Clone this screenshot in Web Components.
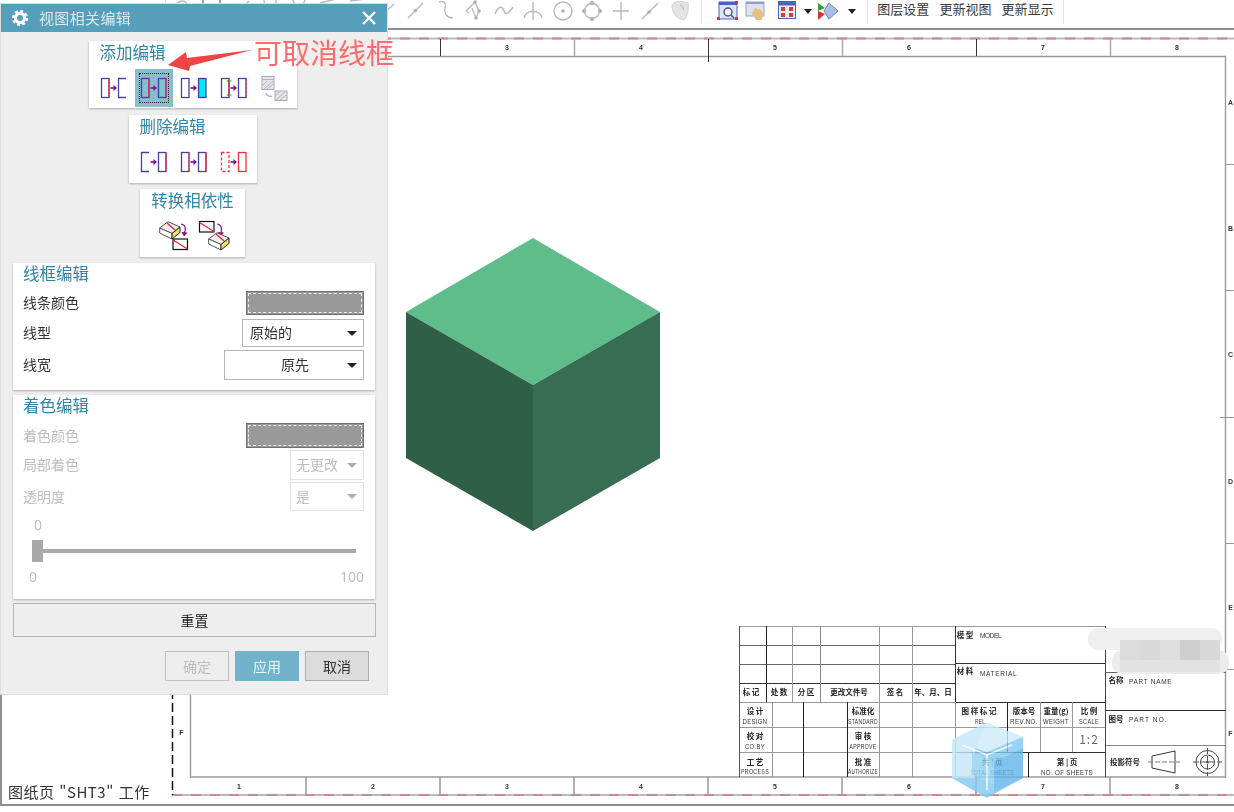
<!DOCTYPE html>
<html lang="zh">
<head>
<meta charset="utf-8">
<title>视图相关编辑</title>
<style>
  html, body { margin: 0; height: 100%; background: #fff; font-family: "Noto Sans CJK SC", "Liberation Sans", sans-serif; }
  body { overflow: hidden; }
</style>
</head>
<body>
<cad-app>
  <cad-toolbar></cad-toolbar>
  <drawing-sheet>
    <part-cube></part-cube>
    <title-block></title-block>
  </drawing-sheet>
  <status-note>图纸页 "SHT3" 工作</status-note>
  <view-dialog></view-dialog>
  <red-note>可取消线框</red-note>
</cad-app>

<script>
const CJK = '"Noto Sans CJK SC", "Liberation Sans", sans-serif';

// page shell: toolbar on top, canvas under it, the rest floats
class CadApp extends HTMLElement {
  constructor() {
    super();
    this.attachShadow({ mode: 'open' });
    this.shadowRoot.innerHTML = `
      <style>
        :host { display: flex; flex-direction: column; position: relative; width: 1234px; height: 812px; overflow: hidden; filter: blur(.35px); }
      </style>
      <slot></slot>
    `;
  }
}

const TB_GRAY = 'fill="none" stroke="#b9b9b9" stroke-width="1.4"';
const TOOL_ICONS = [
  `<circle cx="12" cy="8" r="6" ${TB_GRAY}/>`,
  `<rect x="4" y="-6" width="17" height="14" fill="none" stroke="#c55" stroke-width="1.4"/>`,
  `<path d="M4 18 20 2" ${TB_GRAY}/>`,
  `<circle cx="12" cy="2" r="6" ${TB_GRAY}/>`,
  `<circle cx="12" cy="0" r="6" ${TB_GRAY}/>`,
  `<path d="M4 4 20 0" ${TB_GRAY}/>`,
  `<path d="M4 2 20 0" ${TB_GRAY}/>`,
  `<path d="M4 19 19 5" ${TB_GRAY}/>`,
  `<path d="M4 19 19 4" ${TB_GRAY}/><circle cx="11.5" cy="11.5" r="1.8" fill="#b0b0b0"/>`,
  `<path d="M6 3C12 1 13 5 12 9 11 15 14 19 20 19" ${TB_GRAY}/>`,
  `<path d="M3 12 12 3 16 12 13 19 9 9M3 12 6 14" ${TB_GRAY}/><circle cx="12" cy="3" r="1.8" fill="#b0b0b0"/><circle cx="16" cy="12" r="1.8" fill="#b0b0b0"/><circle cx="13" cy="19" r="1.8" fill="#b0b0b0"/>`,
  `<path d="M3 15C7 6 10 7 12 12 14 17 17 14 21 8" ${TB_GRAY}/>`,
  `<path d="M12 3V21M3 19C5 10 19 10 21 19" ${TB_GRAY}/>`,
  `<circle cx="12" cy="12" r="9" ${TB_GRAY}/><circle cx="12" cy="12" r="1.8" fill="#b0b0b0"/>`,
  `<circle cx="12" cy="12" r="7.5" ${TB_GRAY}/><circle cx="12" cy="4" r="2" fill="#b0b0b0"/><circle cx="12" cy="20" r="2" fill="#b0b0b0"/><circle cx="4" cy="12" r="2" fill="#b0b0b0"/><circle cx="20" cy="12" r="2" fill="#b0b0b0"/>`,
  `<path d="M12 3V21M4 12H20" ${TB_GRAY}/>`,
  `<path d="M4 20 20 4" ${TB_GRAY}/><circle cx="11" cy="13" r="1.8" fill="#b0b0b0"/>`,
  `<path d="M4 6C8 1 15 2 20 4 21 9 20 16 16 21 9 20 4 14 4 6Z" fill="#e4e4e4" stroke="#d0d0d0"/><path d="M12 6C15 7 16 9 15 11" fill="none" stroke="#aaa"/>`
];

class CadToolbar extends HTMLElement {
  constructor() {
    super();
    this.attachShadow({ mode: 'open' });
    const slots = TOOL_ICONS.map(p => `<svg class="tool" viewBox="0 0 24 24" width="24" height="24">${p}</svg>`).join('');
    this.shadowRoot.innerHTML = `
      <style>
        :host { display: flex; align-items: flex-start; flex: none; box-sizing: border-box; height: 30px; border-bottom: 2px solid #8b8f91; padding-left: 165px; background: #fff; }
        .sep { flex: none; width: 1px; height: 24px; background: #e2e2e2; }
        .tool { flex: none; margin: -1px 2.65px 0; }
        .solid { flex: none; margin-top: 0; }
        .drop { flex: none; width: 0; height: 0; margin-top: 9px; border: 4px solid transparent; border-top: 5px solid #222; border-bottom: 0; }
        .txt { flex: none; margin-top: -1px; font: 13px/20px ${CJK}; color: #3a3a3a; }
      </style>
      <div class="sep"></div>
      <div style="width:1.3px"></div>
      ${slots}
      <div class="sep" style="margin-left:7px"></div>
      <svg class="solid" style="margin-left:15px" width="22" height="22" viewBox="0 0 22 22">
        <rect x="2" y="2" width="18" height="17" fill="#dbe6f4" stroke="#4a64b8"/><rect x="2" y="2" width="18" height="3" fill="#4a64b8"/>
        <circle cx="11" cy="12" r="4" fill="#eef" stroke="#556" stroke-width="1.4"/><path d="M14 15 17 18" stroke="#556" stroke-width="1.5"/>
        <rect x="0" y="17" width="3" height="3" fill="#d33"/><rect x="18" y="1" width="3" height="3" fill="#d33"/><rect x="18" y="17" width="3" height="3" fill="#d33"/>
      </svg>
      <svg class="solid" style="margin-left:5px" width="22" height="22" viewBox="0 0 22 22">
        <rect x="2" y="2" width="18" height="14" fill="#dde3ec" stroke="#9aa6bc"/><rect x="2" y="2" width="18" height="2" fill="#8ea2c8"/>
        <path d="M10 9 12 8 14 10 16 9 19 13 18 20 12 20 8 14Z" fill="#e9bd84"/>
      </svg>
      <svg class="solid" style="margin-left:11px" width="20" height="22" viewBox="0 0 20 22">
        <rect x="1.5" y="1.5" width="17" height="17" fill="#e6ecf8" stroke="#4a64b8"/><rect x="1.5" y="1.5" width="17" height="4" fill="#4a64b8"/>
        <rect x="4" y="7" width="4" height="4" fill="#d83c2c"/><rect x="12" y="7" width="4" height="4" fill="#d83c2c"/><rect x="4" y="13" width="4" height="4" fill="#d83c2c"/><rect x="12" y="13" width="4" height="4" fill="#d83c2c"/>
      </svg>
      <div class="drop" style="margin-left:7px"></div>
      <svg class="solid" style="margin-left:4px" width="24" height="22" viewBox="0 0 24 22">
        <path d="M13 3 22 11 13 19 8 11Z" fill="#a9bfe4" stroke="#7088b8"/>
        <path d="M2 3 9 8 2 11Z" fill="#3a9a3a"/><path d="M2 11 9 14 2 20Z" fill="#d8342c"/>
      </svg>
      <div class="drop" style="margin-left:8px"></div>
      <div class="sep" style="margin-left:11px"></div>
      <div class="txt" style="margin-left:9px">图层设置</div>
      <div class="txt" style="margin-left:10px">更新视图</div>
      <div class="txt" style="margin-left:10px">更新显示</div>
      <div class="sep" style="margin-left:10px"></div>
    `;
  }
}

// frame of the sheet, drawn in page coordinates
class DrawingSheet extends HTMLElement {
  constructor() {
    super();
    this.attachShadow({ mode: 'open' });
    let s = '';
    const zoneX = [172, 306, 440, 574, 708, 842, 976, 1110];
    zoneX.slice(1).forEach((x, i) => {
      const dark = i % 2 === 1;
      s += `<path d="M${x + .5} 39V${x === 708 ? 62 : 56}" stroke="${dark ? '#333' : '#aaa'}" stroke-width="${dark ? 1 : 1.5}"/>`;
      s += `<path d="M${x} 777V795" stroke="#999" stroke-width="1.5"/>`;
    });
    zoneX.forEach((x, i) => {
      if (i >= 2) s += `<text x="${x + 67}" y="50" class="z">${i + 1}</text>`;
      s += `<text x="${x + 67}" y="789" class="z">${i + 1}</text>`;
    });
    ['A', 'B', 'C', 'D', 'E', 'F'].forEach((l, i) => {
      s += `<text x="1230.5" y="${105 + i * 126.2}" class="z">${l}</text>`;
    });
    [164, 290, 417, 543, 669].forEach(y => {
      s += `<path d="M${y === 417 ? 1220 : 1226} ${y + .5}H1234" stroke="#999"/>`;
    });
    this.shadowRoot.innerHTML = `
      <style>
        :host { display: block; position: relative; flex: none; box-sizing: content-box; height: 774px; border-left: 2px solid #8b8f91; border-bottom: 2px solid #8b8f91; }
        svg { display: block; }
        .z { font: bold 7px "Liberation Sans", sans-serif; text-anchor: middle; fill: #333; }
      </style>
      <svg width="1232" height="774" viewBox="2 30 1232 774">
        <path d="M172 38.5H1234M172 795H1234" stroke="#bbb" stroke-width="2"/>
        <path d="M172 38.5H1234M172 795H1234" stroke="#c98b8b" stroke-width="2" stroke-dasharray="10 9"/>
        <path d="M172.5 40V795" stroke="#111" stroke-width="1.5" stroke-dasharray="9 4"/>
        <path d="M190.5 777V56.5H1225.5V777Z" fill="none" stroke="#9a9a9a" stroke-width="1.4"/>
        <text x="181.5" y="735" class="z">F</text>
        ${s}
      </svg>
      <slot></slot>
    `;
  }
}

class PartCube extends HTMLElement {
  constructor() {
    super();
    this.attachShadow({ mode: 'open' });
    this.shadowRoot.innerHTML = `
      <style>
        :host { display: block; position: absolute; left: 404px; top: 208px; width: 254px; height: 293px; }
        svg { display: block; }
      </style>
      <svg width="254" height="293" viewBox="406 238 254 293">
        <path d="M533 238 660 312 533 385 406 312Z" fill="#5fbd8b"/>
        <path d="M406 312 533 385V531L406 458Z" fill="#305f48"/>
        <path d="M660 312 533 385V531L660 458Z" fill="#376e53"/>
      </svg>
    `;
  }
}

class TitleBlock extends HTMLElement {
  constructor() {
    super();
    this.attachShadow({ mode: 'open' });
    const hl = (y, a, b, c) => `<path d="M${a} ${y + .5}H${b}" stroke="${c}"/>`;
    const vl = (x, a, b, c) => `<path d="M${x + .5} ${a}V${b}" stroke="${c}"/>`;
    const cn = (x, y, t, size = 7.5) => `<text x="${x}" y="${y}" class="cn" style="font-size:${size}px">${t}</text>`;
    const en = (x, y, t, w) => `<text x="${x}" y="${y}" class="en" textLength="${w}" lengthAdjust="spacingAndGlyphs">${t}</text>`;
    const left = (x, y, t, w) => `<text x="${x}" y="${y}" class="en" style="text-anchor:start" textLength="${w}">${t}</text>`;
    let s = '';
    [[645, '#666'], [664, '#666'], [683, '#333']].forEach(([y, c]) => { s += hl(y, 739, 955, c); });
    s += hl(626, 739, 1105, '#999') + hl(702, 739, 955, '#999') + hl(727, 739, 1105, '#999') + hl(752, 739, 955, '#999');
    s += hl(663, 955, 1105, '#333') + hl(702, 955, 1105, '#333') + hl(752, 955, 1105, '#333');
    s += hl(672, 1105, 1226, '#666') + hl(710, 1105, 1226, '#333') + hl(745, 1105, 1226, '#888');
    [[766, '#222'], [792, '#999'], [820, '#888'], [879, '#999'], [912, '#999']].forEach(([x, c]) => { s += vl(x, 626, 702, c); });
    s += vl(739, 626, 777, '#555') + vl(955, 626, 702, '#333') + vl(955, 702, 777, '#999');
    s += vl(772, 702, 777, '#999') + vl(803, 702, 777, '#222') + vl(847, 702, 777, '#222') + vl(879, 702, 777, '#999') + vl(912, 702, 777, '#999');
    s += vl(1105, 626, 777, '#444') + vl(1007, 702, 752, '#222') + vl(1040, 702, 752, '#999') + vl(1072, 702, 752, '#999') + vl(1028, 752, 777, '#222');
    [[751, '标 记'], [779, '处 数'], [806, '分 区'], [849, '更改文件号'], [895, '签 名'], [933, '年、月、日']].forEach(([x, t]) => { s += cn(x, 695, t); });
    s += cn(755, 714, '设 计') + en(755, 724, 'DESIGN', 25) + cn(755, 739, '校 对') + en(755, 749, 'CO.BY', 20) + cn(755, 765, '工 艺') + en(755, 774, 'PROCESS', 28);
    s += cn(863, 714, '标准化') + en(863, 724, 'STANDARD', 30) + cn(863, 739, '审 核') + en(863, 749, 'APPROVE', 27) + cn(863, 765, '批 准') + en(863, 774, 'AUTHORIZE', 30);
    s += cn(979, 714, '图 样 标 记') + en(981, 724, 'REL.', 12);
    s += cn(1024, 714, '版本号') + en(1024, 724, 'REV.NO.', 28);
    s += cn(1056, 714, '重量(g)') + en(1056, 724, 'WEIGHT', 26);
    s += cn(1089, 714, '比 例') + en(1089, 724, 'SCALE', 20);
    s += `<text x="1089" y="744" class="cn" style="font-size:12px;font-weight:400;fill:#666;letter-spacing:1px">1:2</text>`;
    s += cn(992, 765, '共 | 页') + en(992, 775, 'TOTAL SHEETS', 44);
    s += cn(1067, 765, '第 | 页') + en(1067, 775, 'NO. OF SHEETS', 52);
    s += cn(965, 638, '模 型') + left(980, 638, 'MODEL', 22);
    s += cn(965, 674, '材 料') + left(980, 676, 'MATERIAL', 37);
    s += cn(1116, 683, '名称') + left(1129, 684, 'PART NAME', 43);
    s += cn(1116, 722, '图号') + left(1129, 722, 'PART NO.', 38);
    s += cn(1125, 765, '投影符号');
    s += `<path d="M1152 756 1175 751V773L1152 768Z" fill="none" stroke="#333"/><path d="M1148 762H1180" stroke="#777" stroke-dasharray="5 2"/>`;
    s += `<g fill="none" stroke="#444"><circle cx="1207.5" cy="762" r="11.5"/><circle cx="1207.5" cy="762" r="7"/></g><circle cx="1207.5" cy="762" r="1.5" fill="#555"/><path d="M1207.5 748V776M1193 762H1222" stroke="#555" stroke-dasharray="6 2"/>`;
    this.shadowRoot.innerHTML = `
      <style>
        :host { display: block; position: absolute; left: 734px; top: 594px; width: 498px; height: 180px; }
        svg { display: block; }
        .cn { font-family: ${CJK}; font-weight: 700; text-anchor: middle; fill: #222; }
        .en { font: 6.5px "Liberation Sans", sans-serif; text-anchor: middle; fill: #333; letter-spacing: .4px; }
      </style>
      <svg width="498" height="180" viewBox="736 624 498 180">
        ${s}
        <g>
          <rect x="1088" y="628" width="134" height="22" rx="10" fill="#efefef"/>
          <rect x="1112" y="650" width="117" height="24" rx="10" fill="#ececec"/>
          <rect x="1120" y="640" width="20" height="20" fill="#dcdcdc"/><rect x="1140" y="640" width="20" height="20" fill="#d9d9d9"/>
          <rect x="1160" y="640" width="20" height="20" fill="#dedede"/><rect x="1180" y="640" width="20" height="20" fill="#cecece"/>
          <rect x="1200" y="640" width="20" height="20" fill="#d8d8d8"/><rect x="1120" y="660" width="100" height="12" fill="#e2e2e2"/>
        </g>
        <g opacity=".8">
          <path d="M987 723 1023 737V778L987 798 952 778V740Z" fill="#80c8f0"/>
          <path d="M987 723 1023 737 987 752 952 740Z" fill="#cdeafa"/>
          <path d="M952 740 965 733 987 723 975 748 975 778 952 778Z" fill="#c4e6f8"/>
          <path d="M972 752 994 762V785L972 775Z" fill="#8fd0f2"/>
          <path d="M994 762 1023 748V778L994 792Z" fill="#5fb4ea"/>
          <path d="M962 745 987 755 1012 745M987 755V790" fill="none" stroke="#f2fbff" stroke-width="1.5"/>
        </g>
      </svg>
    `;
  }
}

class StatusNote extends HTMLElement {
  constructor() {
    super();
    this.attachShadow({ mode: 'open' });
    this.shadowRoot.innerHTML = `
      <style>
        :host { display: block; position: absolute; left: 8px; top: 781px; font: 15px/22px ${CJK}; color: #333; letter-spacing: .5px; word-spacing: 1px; white-space: nowrap; }
      </style>
      <slot></slot>
    `;
  }
}

class RedNote extends HTMLElement {
  constructor() {
    super();
    this.attachShadow({ mode: 'open' });
    this.shadowRoot.innerHTML = `
      <style>
        :host { display: block; position: absolute; left: 0; top: 0; width: 400px; height: 80px; pointer-events: none; }
        svg { position: absolute; left: 0; top: 0; }
        span { position: absolute; left: 254px; top: 32px; font: 28px/40px ${CJK}; color: #ff6a6a; white-space: nowrap; }
      </style>
      <svg width="400" height="80"><path d="M168 65 186 52 187 58 252 50 190 66 189 71Z" fill="#f04444"/></svg>
      <span><slot></slot></span>
    `;
  }
}

const BLUE = '#4440a8', RED = '#f0303c', ARROW = '<path d="M9.5 10H13" stroke="#80108c" stroke-width="1.6"/><path d="M12.5 7 16 10 12.5 13Z" fill="#80108c"/>';
const box = (x, fill = 'none') => `<rect x="${x}" y=".5" width="7.5" height="19" fill="${fill}" stroke="${BLUE}" stroke-width="1.3"/>`;
const redEdge = x => `<path d="M${x} .5V19.5" stroke="${RED}" stroke-width="1.3"/>`;
const redDash = x => `<path d="M${x} .5V19.5" stroke="${RED}" stroke-width="1.3" stroke-dasharray="2.5 1.5"/>`;
const brick = (dx, dy) => `<g transform="translate(${dx} ${dy})">
    <path d="M.7 7 9 .7 21 6 13 12.5Z" fill="#eee" stroke="#555" stroke-width="1"/>
    <path d="M.7 7V12L13 18V12.5Z" fill="#fff" stroke="#555" stroke-width="1"/>
    <path d="M13 12.5 21 6V11.5L13 18Z" fill="#f0e060" stroke="#222" stroke-width="1"/>
    <path d="M8 2 16 9" stroke="#e82030" stroke-width="1.3"/></g>`;
const sheet = (x, y) => `<rect x="${x}" y="${y}" width="14.5" height="10.5" fill="#fff" stroke="#111" stroke-width="1.2"/><path d="M${x} ${y + 1}L${x + 14.5} ${y + 10}" stroke="#e82030" stroke-width="1.2"/>`;

const EDIT_ICONS = {
  addLeft: box(.5) + redEdge(8) + ARROW + `<path d="M25 .5H17.5V19.5H25" fill="none" stroke="${BLUE}" stroke-width="1.3"/>`,
  addBoth: box(.5) + redEdge(8) + ARROW + box(17.5) + redDash(25),
  addFill: box(.5) + ARROW + box(17.5, '#00e4ff'),
  addTrim: box(.5) + redEdge(8) + '<path d="M5.5 3H10.5M5.5 17H10.5" stroke="#1a9a34" stroke-width="1.2"/>' + ARROW + box(17.5) + redDash(25),
  addHatch: `<rect x="1" y=".5" width="12" height="13" fill="#e4e4ea" stroke="#a8a8c0"/><path d="M1 3.5H13" stroke="#c8a8b8"/><path d="M3 13 12 5M6 13 12 8M2 9 6 5" stroke="#b8b8b8"/>
    <path d="M5 17C6 20 9 21 11 20" fill="none" stroke="#b49ac8" stroke-width="1.1"/>
    <rect x="14" y="15" width="12" height="9.5" fill="#e4e4e4" stroke="#a8a8c0"/><path d="M15 24 24 16M19 24 25 19M14 20 18 16" stroke="#b8b8b8"/>`,
  delLeft: `<path d="M8 .5H.5V19.5H8" fill="none" stroke="${BLUE}" stroke-width="1.3"/>` + ARROW + box(17.5) + redEdge(25),
  delInner: box(.5) + redDash(8) + ARROW + box(17.5) + redEdge(25),
  delAll: `<rect x=".5" y=".5" width="7.5" height="19" fill="none" stroke="${RED}" stroke-width="1.3" stroke-dasharray="3 2"/>` + ARROW + `<rect x="17.5" y=".5" width="7.5" height="19" fill="none" stroke="${RED}" stroke-width="1.3"/>`,
  toSheet: brick(0, 0) + `<path d="M22 3C27 4 27 8 25.5 12" fill="none" stroke="#80108c" stroke-width="1.2"/><path d="M22.5 11 28.5 11.5 25 15.5Z" fill="#80108c"/>` + sheet(14, 18),
  toSolid: sheet(.5, .5) + `<path d="M18 3C23 4 23 8 22 12" fill="none" stroke="#80108c" stroke-width="1.2"/><path d="M19 11 25 11.5 21.5 15.5Z" fill="#80108c"/>` + brick(9, 11)
};

class EditIcon extends HTMLElement {
  connectedCallback() {
    if (this.shadowRoot) return;
    this.attachShadow({ mode: 'open' });
    const kind = this.getAttribute('kind');
    const big = kind === 'toSheet' || kind === 'toSolid' ;
    const tall = kind === 'addHatch';
    this.shadowRoot.innerHTML = `
      <style>
        :host { display: flex; align-items: center; justify-content: center; width: 40px; height: 38px; }
        .on { display: flex; align-items: center; justify-content: center; box-sizing: border-box; width: 38px; height: 38px; }
        :host([selected]) .on { background: #8abccf; outline: 1.5px dotted #222; outline-offset: -5px; }
        svg { display: block; overflow: visible; }
      </style>
      <div class="on">
        <svg width="${big ? 30 : 26}" height="${big ? 30 : tall ? 25 : 20}" viewBox="0 0 ${big ? 30 : 26} ${big ? 30 : tall ? 25 : 20}">${EDIT_ICONS[kind]}</svg>
      </div>
    `;
  }
}

class DialogCard extends HTMLElement {
  constructor() {
    super();
    this.attachShadow({ mode: 'open' });
    this.shadowRoot.innerHTML = `
      <style>
        :host { display: block; flex: none; box-sizing: border-box; background: #fff; box-shadow: 0 1px 2px rgba(0,0,0,.28); }
        .t { height: 24px; font: 16.5px/21px ${CJK}; color: #2f86a8; padding: 0 14px 0 10px; white-space: nowrap; }
        :host([icons]) .t { height: 28px; line-height: 22px; padding-left: 11px; padding-right: 11px; }
        .row { display: flex; justify-content: center; padding: 0 3px 0 5px; }
        :host(:not([icons])) .row { display: block; padding: 0 11px 0 11px; }
      </style>
      <div class="t"><slot name="title"></slot></div>
      <div class="row"><slot></slot></div>
    `;
  }
}

class FieldRow extends HTMLElement {
  constructor() {
    super();
    this.attachShadow({ mode: 'open' });
    this.shadowRoot.innerHTML = `
      <style>
        :host { display: flex; align-items: center; justify-content: space-between; font: 14px/20px ${CJK}; color: #333; }
        :host([disabled]) { color: #bdbdbd; }
        span { margin: -2px 0 0 -1px; }
      </style>
      <span><slot name="label"></slot></span>
      <slot></slot>
    `;
  }
}

class ColorSwatch extends HTMLElement {
  constructor() {
    super();
    this.attachShadow({ mode: 'open' });
    this.shadowRoot.innerHTML = `
      <style>
        :host { display: block; box-sizing: border-box; width: 118px; height: 100%; background: #999; border: 1px solid #707070; padding: 1px; }
        div { box-sizing: border-box; height: 100%; border: 1px dashed #eee; }
      </style>
      <div></div>
    `;
  }
}

class SelectBox extends HTMLElement {
  constructor() {
    super();
    this.attachShadow({ mode: 'open' });
    this.shadowRoot.innerHTML = `
      <style>
        :host { display: flex; align-items: center; box-sizing: border-box; height: 100%; background: #fff; border: 1.5px solid #b5b5b5; padding: 0 6px 0 7px; font: 14px/20px ${CJK}; color: #333; }
        :host([disabled]) { border-color: #e2e2e2; color: #bdbdbd; padding-left: 5px; }
        .v { flex: 1; margin-top: -2px; }
        :host([center]) .v { text-align: center; padding-left: 11px; }
        i { flex: none; width: 0; height: 0; border: 5px solid transparent; border-top: 5px solid #222; border-bottom: 0; }
        :host([disabled]) i { border-top-color: #b0b0b0; }
      </style>
      <span class="v"><slot></slot></span>
      <i></i>
    `;
  }
}

class OpacitySlider extends HTMLElement {
  constructor() {
    super();
    this.attachShadow({ mode: 'open' });
    this.shadowRoot.innerHTML = `
      <style>
        :host { display: block; font: 14px/20px "Open Sans", "Liberation Sans", sans-serif; color: #bdbdbd; }
        .val { padding-left: 10px; height: 20px; }
        .bar { display: flex; align-items: center; height: 22px; margin: 5px 8px 5px 8px; }
        .thumb { flex: none; width: 11px; height: 22px; background: #a9a9a9; }
        .track { flex: 1; height: 4px; background: #a9a9a9; }
        .scale { display: flex; justify-content: space-between; padding: 0 0 0 5px; }
      </style>
      <div class="val">0</div>
      <div class="bar"><div class="thumb"></div><div class="track"></div></div>
      <div class="scale"><span>0</span><span>100</span></div>
    `;
  }
}

class FlatButton extends HTMLElement {
  constructor() {
    super();
    this.attachShadow({ mode: 'open' });
    this.shadowRoot.innerHTML = `
      <style>
        :host { display: flex; align-items: center; justify-content: center; flex: none; box-sizing: border-box; width: 64px; height: 30px; padding-bottom: 1px; border: 1.5px solid #adadad; background: #dcdcdc; color: #333; font: 14px/20px ${CJK}; }
        :host([disabled]) { background: #eee; color: #bdbdbd; border-color: #c0c0c0; }
        :host([primary]) { background: #71b3ca; border-color: #71b3ca; color: #eaf6fa; }
        :host([wide]) { width: 363px; height: 34px; background: #eee; border-color: #b5b5b5; color: #222; }
      </style>
      <slot></slot>
    `;
  }
}

class ViewDialog extends HTMLElement {
  constructor() {
    super();
    this.attachShadow({ mode: 'open' });
    this.shadowRoot.innerHTML = `
      <style>
        :host { display: flex; flex-direction: column; position: absolute; left: 1px; top: 4px; box-sizing: border-box; width: 386px; height: 690px; background: #eee; box-shadow: 0 0 0 1px #ddd; }
        .head { display: flex; align-items: center; flex: none; height: 28px; background: #569fba; color: #dbeaf0; font: 15px/28px ${CJK}; padding: 0 9px 0 10px; }
        .head svg { flex: none; }
        .head .name { flex: 1; margin-left: 10px; letter-spacing: .35px; }
        .body { display: flex; flex-direction: column; align-items: center; flex: 1; padding: 9px 3px 0 0; }
        .h67 { height: 67px; margin-bottom: 7px; }
        .h68 { height: 68px; margin-bottom: 6px; }
        .wide { align-self: flex-start; margin-left: 12px; width: 362px; }
        .wire { height: 127px; margin-bottom: 5px; }
        .shade { height: 204px; margin-bottom: 4px; }
        .wire field-row:nth-of-type(1) { height: 24px; margin-top: 4px; }
        .wire field-row:nth-of-type(2) { height: 28px; margin-top: 4px; }
        .wire field-row:nth-of-type(3) { height: 30px; margin-top: 3px; }
        .shade field-row:nth-of-type(1) { height: 25px; margin-top: 4px; }
        .shade field-row:nth-of-type(2) { height: 30px; margin-top: 2px; }
        .shade field-row:nth-of-type(3) { height: 29px; margin-top: 2px; }
        opacity-slider { margin-top: 4px; }
        .foot { display: flex; justify-content: flex-end; gap: 6px; align-self: stretch; padding: 14px 15px 0 0; }
        .reset { align-self: flex-start; margin-left: 12px; }
      </style>
      <div class="head">
        <svg width="18" height="18" viewBox="0 0 18 18">
          <circle cx="9" cy="9" r="4.6" fill="none" stroke="#fff" stroke-width="3.2"/>
          <circle cx="9" cy="9" r="7" fill="none" stroke="#fff" stroke-width="2.2" stroke-dasharray="3 2.5"/>
        </svg>
        <span class="name">视图相关编辑</span>
        <svg width="18" height="18" viewBox="0 0 18 18"><path d="M3 3 15 15M15 3 3 15" stroke="#fff" stroke-width="2.4"/></svg>
      </div>
      <div class="body">
        <dialog-card class="h67" icons>
          <span slot="title">添加编辑</span>
          <edit-icon kind="addLeft"></edit-icon><edit-icon kind="addBoth" selected></edit-icon><edit-icon kind="addFill"></edit-icon><edit-icon kind="addTrim"></edit-icon><edit-icon kind="addHatch"></edit-icon>
        </dialog-card>
        <dialog-card class="h68" icons>
          <span slot="title">删除编辑</span>
          <edit-icon kind="delLeft"></edit-icon><edit-icon kind="delInner"></edit-icon><edit-icon kind="delAll"></edit-icon>
        </dialog-card>
        <dialog-card class="h68" icons>
          <span slot="title">转换相依性</span>
          <edit-icon kind="toSheet"></edit-icon><edit-icon kind="toSolid"></edit-icon>
        </dialog-card>
        <dialog-card class="wide wire">
          <span slot="title">线框编辑</span>
          <field-row><span slot="label">线条颜色</span><color-swatch></color-swatch></field-row>
          <field-row><span slot="label">线型</span><select-box style="width:122px">原始的</select-box></field-row>
          <field-row><span slot="label">线宽</span><select-box style="width:140px" center>原先</select-box></field-row>
        </dialog-card>
        <dialog-card class="wide shade">
          <span slot="title">着色编辑</span>
          <field-row disabled><span slot="label">着色颜色</span><color-swatch></color-swatch></field-row>
          <field-row disabled><span slot="label">局部着色</span><select-box style="width:74px" disabled>无更改</select-box></field-row>
          <field-row disabled><span slot="label">透明度</span><select-box style="width:74px" disabled>是</select-box></field-row>
          <opacity-slider></opacity-slider>
        </dialog-card>
        <flat-button class="reset" wide>重置</flat-button>
        <div class="foot">
          <flat-button disabled>确定</flat-button>
          <flat-button primary>应用</flat-button>
          <flat-button>取消</flat-button>
        </div>
      </div>
    `;
  }
}

customElements.define('cad-app', CadApp);
customElements.define('cad-toolbar', CadToolbar);
customElements.define('drawing-sheet', DrawingSheet);
customElements.define('part-cube', PartCube);
customElements.define('title-block', TitleBlock);
customElements.define('status-note', StatusNote);
customElements.define('red-note', RedNote);
customElements.define('edit-icon', EditIcon);
customElements.define('dialog-card', DialogCard);
customElements.define('field-row', FieldRow);
customElements.define('color-swatch', ColorSwatch);
customElements.define('select-box', SelectBox);
customElements.define('opacity-slider', OpacitySlider);
customElements.define('flat-button', FlatButton);
customElements.define('view-dialog', ViewDialog);
</script>
</body>
</html>
